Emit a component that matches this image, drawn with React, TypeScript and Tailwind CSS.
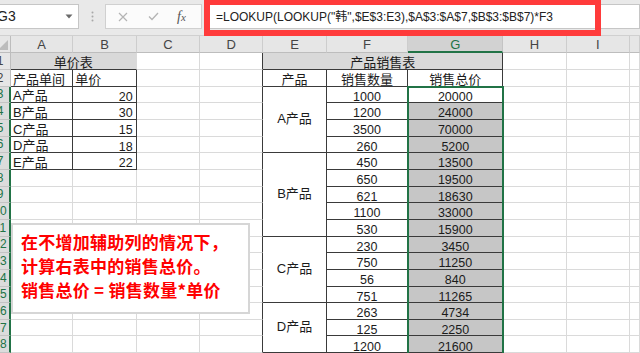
import React from "react";

type Brd = "g" | "d" | "n";
type Cell = {
  t?: string;
  a?: "l" | "r" | "c";
  span?: string;
  bg?: string;
  r?: Brd;
  b?: Brd;
  num?: boolean;
  key: string;
};

const RB: Record<Brd, string> = {
  g: "border-r border-r-[#dadada]",
  d: "border-r border-r-[#3a3a3a]",
  n: "",
};
const BB: Record<Brd, string> = {
  g: "border-b border-b-[#dadada]",
  d: "border-b border-b-[#3a3a3a]",
  n: "",
};
const AL = {
  l: "justify-start pl-[2px]",
  r: "justify-end pr-[3px]",
  c: "justify-center",
};

const T1: [string, string][] = [
  ["A产品", "20"],
  ["B产品", "30"],
  ["C产品", "15"],
  ["D产品", "18"],
  ["E产品", "22"],
];
const FV = ["1000", "1200", "3500", "260", "450", "650", "621", "1100", "530", "230", "750", "56", "751", "263", "125", "1200"];
const GV = ["20000", "24000", "70000", "5200", "13500", "19500", "18630", "33000", "15900", "3450", "11250", "840", "11265", "4734", "2250", "21600"];
const MERGE: Record<number, { label: string; span: string }> = {
  3: { label: "A产品", span: "row-span-4" },
  7: { label: "B产品", span: "row-span-5" },
  12: { label: "C产品", span: "row-span-4" },
  16: { label: "D产品", span: "row-span-3" },
};

const COLS = ["A", "B", "C", "D", "E", "F", "G", "H", "I", ""];
const GRID =
  "grid grid-cols-[11px_62.33px_63.33px_63.33px_63.33px_63.33px_81.67px_95px_63.33px_63.33px_1fr]";

function buildRow(r: number): Cell[] {
  const cells: Cell[] = [];
  const g = (k: string, extra: Partial<Cell> = {}): Cell => ({ key: `${k}${r}`, r: "g", b: "g", ...extra });
  if (r === 1) {
    cells.push(g("A", { t: "单价表", a: "c", span: "col-span-2", bg: "bg-[#d9d9d9]", b: "d" }));
  } else if (r === 2) {
    cells.push(g("A", { t: "产品单间", a: "l", r: "d", b: "d" }));
    cells.push(g("B", { t: "单价", a: "l", r: "d", b: "d" }));
  } else if (r <= 7) {
    const [l, v] = T1[r - 3];
    cells.push(g("A", { t: l, a: "l", r: "d", b: "d" }));
    cells.push(g("B", { t: v, a: "r", r: "d", b: "d", num: true }));
  } else {
    cells.push(g("A"));
    cells.push(g("B"));
  }
  cells.push(g("C"));
  cells.push(g("D", { r: "d" }));
  if (r === 1) {
    cells.push(g("E", { t: "产品销售表", a: "c", span: "col-span-3", bg: "bg-[#d9d9d9]", r: "d", b: "d" }));
  } else if (r === 2) {
    cells.push(g("E", { t: "产品", a: "c", r: "d", b: "d" }));
    cells.push(g("F", { t: "销售数量", a: "c", r: "d", b: "d" }));
    cells.push(g("G", { t: "销售总价", a: "c", r: "d", b: "d" }));
  } else {
    const m = MERGE[r];
    if (m) cells.push(g("E", { t: m.label, a: "c", span: m.span, r: "d", b: "d" }));
    cells.push(g("F", { t: FV[r - 3], a: "c", r: "d", b: "d", num: true }));
    cells.push(
      g("G", { t: GV[r - 3], a: "c", r: "d", b: "d", num: true, bg: r >= 4 ? "bg-[#c6c6c6]" : "bg-white" })
    );
  }
  cells.push(g("H"));
  cells.push(g("I"));
  cells.push(g("J"));
  return cells;
}

function SheetCell({ c }: { c: Cell }) {
  const cls = [
    "flex overflow-hidden whitespace-nowrap text-[#1b1b1b]",
    c.span && (c.span.startsWith("row") ? "items-center" : "items-end"),
    !c.span || !c.span.startsWith("row") ? "items-end" : "",
    c.span || "",
    c.bg || "",
    RB[c.r || "g"],
    BB[c.b || "g"],
    AL[c.a || "l"],
    c.num ? "text-[12.5px] leading-[10px] pb-[0.5px]" : "text-[13px] leading-[10px] pb-[1px]",
  ].join(" ");
  return <div className={cls}>{c.t}</div>;
}

function RowHeader({ r }: { r: number }) {
  const sel = r >= 3;
  return (
    <div
      className={
        sel
          ? "flex items-center overflow-hidden bg-[#dcdcdc] border-b border-b-[#c4c4c4] border-r-2 border-r-[#217346] text-[#217346]"
          : "flex items-center overflow-hidden bg-[#e6e6e6] border-b border-b-[#c4c4c4] border-r border-r-[#bdbdbd] text-[#444]"
      }
    >
      <div className="ml-[-11px] w-[22px] shrink-0 text-center text-[12px] leading-none">{r}</div>
    </div>
  );
}

export default function App() {
  const rows = Array.from({ length: 18 }, (_, i) => i + 1);
  return (
    <div className="relative w-[640px] h-[353px] overflow-hidden bg-white font-['Liberation_Sans','Noto_Sans_CJK_SC',sans-serif]">
      {/* toolbar */}
      <div className="flex h-[36px] items-start bg-[#e9e9e9] border-b border-b-[#d0d0d0]">
        <div className="mt-[4px] flex h-[25px] w-[79px] shrink-0 items-center overflow-hidden border border-l-0 border-[#c6c6c6] bg-white">
          <span className="ml-[-3px] text-[14px] text-[#222]">G3</span>
          <svg className="ml-auto mr-[5px]" width="8" height="5" viewBox="0 0 8 5">
            <path d="M0.5 0.5 L7.5 0.5 L4 4.5 Z" fill="#6a6a6a" />
          </svg>
        </div>
        <div className="flex h-[36px] w-[26px] shrink-0 items-start justify-center pt-[11px]">
          <svg width="3" height="11" viewBox="0 0 3 11">
            <circle cx="1.5" cy="1.5" r="1" fill="#a8a8a8" />
            <circle cx="1.5" cy="5.5" r="1" fill="#a8a8a8" />
            <circle cx="1.5" cy="9.5" r="1" fill="#a8a8a8" />
          </svg>
        </div>
        <div className="mt-[4px] flex h-[25px] w-[97px] shrink-0 items-center border border-[#d0d0d0] bg-[#fbfbfb]">
          <svg className="ml-[12px]" width="10" height="10" viewBox="0 0 10 10">
            <path d="M1 1 L9 9 M9 1 L1 9" stroke="#b4b4b4" strokeWidth="1.2" />
          </svg>
          <svg className="ml-[20px]" width="11" height="9" viewBox="0 0 11 9">
            <path d="M1 4.5 L4 7.5 L10 1" stroke="#b4b4b4" strokeWidth="1.3" fill="none" />
          </svg>
          <span className="ml-[18px] font-['Liberation_Serif',serif] italic text-[14px] text-[#555] leading-none">
            f<span className="text-[11px]">x</span>
          </span>
        </div>
        <div className="ml-[2px] mt-[4px] flex h-[25px] flex-1 items-center border border-[#c6c6c6] bg-white pl-[11px]">
          <span className="whitespace-nowrap text-[12px] text-[#222]">
            =LOOKUP(LOOKUP("韩",$E$3:E3),$A$3:$A$7,$B$3:$B$7)*F3
          </span>
        </div>
      </div>

      {/* column headers */}
      <div className={`${GRID} h-[17.33px]`}>
        <div className="flex items-end overflow-hidden bg-[#e6e6e6] border-r border-r-[#bdbdbd] border-b border-b-[#bdbdbd]">
          <svg className="mb-[2px]" width="9" height="10" viewBox="0 0 9 10">
            <path d="M8 0 L8 10 L-2 10 Z" fill="#bcbcbc" />
          </svg>
        </div>
        {COLS.map((c) =>
          c === "G" ? (
            <div
              key={c}
              className="flex items-end justify-center bg-[#d2d2d2] border-r border-r-[#c4c4c4] border-b-2 border-b-[#217346] text-[13px] leading-[13px] text-[#217346]"
            >
              {c}
            </div>
          ) : (
            <div
              key={c || "J"}
              className="flex items-end justify-center bg-[#e6e6e6] border-r border-r-[#cdcdcd] border-b border-b-[#bdbdbd] pb-[1px] text-[13px] leading-[13px] text-[#444]"
            >
              {c}
            </div>
          )
        )}
      </div>

      {/* sheet */}
      <div className={`${GRID} grid-rows-[repeat(18,16.667px)]`}>
        {rows.map((r) => (
          <React.Fragment key={r}>
            <RowHeader r={r} />
            {buildRow(r).map((c) => (
              <SheetCell key={c.key} c={c} />
            ))}
          </React.Fragment>
        ))}
      </div>

      {/* selection outline */}
      <div className="pointer-events-none absolute left-[407px] top-[86px] h-[300px] w-[97px] border-2 border-[#217346]" />

      {/* text box */}
      <div className="absolute left-[11px] top-[222.7px] h-[91.5px] w-[239px] border-2 border-[#d6d6d6] bg-white pl-[8px] pt-[5px] font-['Noto_Sans_CJK_SC',sans-serif] text-[17px] font-bold leading-[24.2px] tracking-[0.25px] text-[#ff0000]">
        <div>在不增加辅助列的情况下，</div>
        <div>计算右表中的销售总价。</div>
        <div>销售总价 = 销售数量*单价</div>
      </div>

      {/* red annotation rectangle */}
      <div className="pointer-events-none absolute left-[204px] top-[-1px] h-[37px] w-[397px] border-[6px] border-[#ff3b3b]" />
    </div>
  );
}
